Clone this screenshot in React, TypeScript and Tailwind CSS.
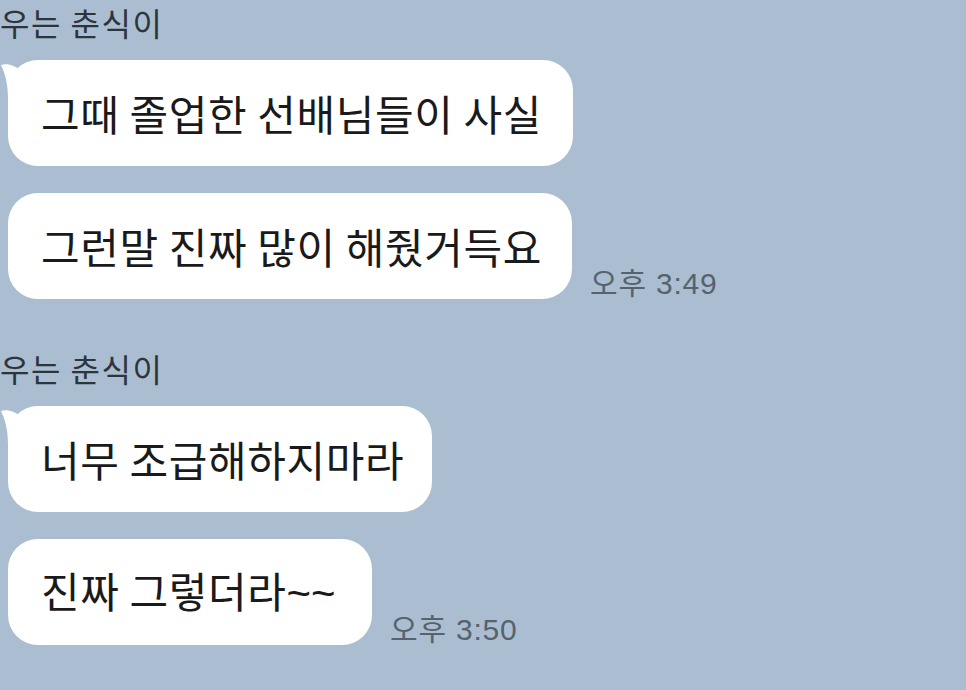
import React from "react";

const Tail = () => (
  <svg
    className="absolute left-[-8px] top-0"
    width="24"
    height="50"
    viewBox="0 0 24 50"
  >
    <path
      d="M1 5 C 8 3, 15 6, 20 10 L 20 50 L 8 50 L 8 38 C 8 24, 5 13, 1 5 Z"
      fill="#ffffff"
    />
  </svg>
);

const Bubble = ({
  children,
  tail,
  w,
}: {
  children: React.ReactNode;
  tail?: boolean;
  w: string;
}) => (
  <div
    className={`relative h-[106px] rounded-[30px] bg-white flex items-center pl-[33px] text-[42px] tracking-[0.6px] leading-none text-[#1a1a1a] whitespace-nowrap ${w}`}
  >
    {tail && <Tail />}
    <span>{children}</span>
  </div>
);

const Time = ({ t }: { t: string }) => (
  <div className="text-[30px] tracking-[0.8px] leading-none text-[#56636f] whitespace-nowrap font-['Liberation_Sans','Noto_Sans_CJK_KR',sans-serif]">
    {t}
  </div>
);

const Name = () => (
  <div className="h-[60px] text-[32px] tracking-[1.5px] leading-none text-[#2d353c] pt-[6px]">
    우는 춘식이
  </div>
);

export default function App() {
  return (
    <div className="w-[966px] h-[690px] overflow-hidden bg-[#abbed1] font-['Noto_Sans_CJK_KR','Noto_Sans',sans-serif]">
      <div className="flex flex-col">
        <Name />
        <div className="flex flex-col gap-[27px] pl-[8px]">
          <Bubble tail w="w-[565px]">
            그때 졸업한 선배님들이 사실
          </Bubble>
          <div className="flex items-end gap-[18px]">
            <Bubble w="w-[564px]">그런말 진짜 많이 해줬거득요</Bubble>
            <Time t="오후 3:49" />
          </div>
        </div>
        <div className="h-[47px]" />
        <Name />
        <div className="flex flex-col gap-[27px] pl-[8px]">
          <Bubble tail w="w-[424px]">
            너무 조급해하지마라
          </Bubble>
          <div className="flex items-end gap-[18px]">
            <Bubble w="w-[364px]">
              진짜 그렇더라
              <span className="font-['Liberation_Sans',sans-serif] tracking-normal">
                ~~
              </span>
            </Bubble>
            <Time t="오후 3:50" />
          </div>
        </div>
      </div>
    </div>
  );
}
